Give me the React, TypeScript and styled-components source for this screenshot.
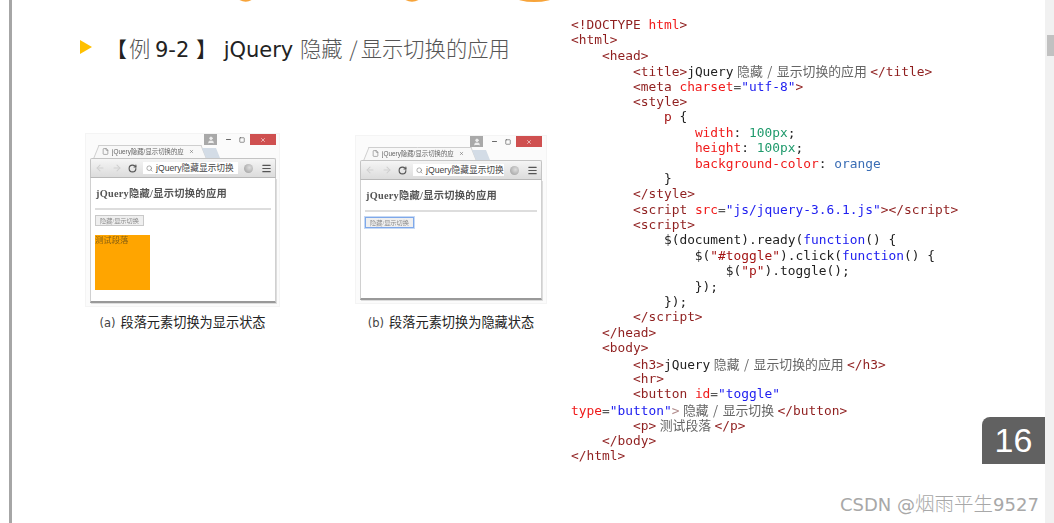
import React from "react";
import styled, { createGlobalStyle } from "styled-components";
import { ArrowLeft, ArrowRight, RotateCw, Search, File, User, Menu, Minus, Square, X } from "lucide-react";

const Global = createGlobalStyle`
  html, body { margin: 0; padding: 0; background: #fff; overflow: hidden; }
`;

const Page = styled.div`
  display: flex;
  width: 1054px;
  height: 523px;
  overflow: hidden;
  background: #fff;
`;
const Slide = styled.main`
  position: relative;
  flex: 1;
  display: flex;
  margin-left: 9px;
  border-left: 3px solid #a6a6a6;
`;
const Scrollbar = styled.div`
  width: 9px;
  background: #f1f1f1;
  display: flex;
  justify-content: flex-end;
  padding-top: 35px;
  box-sizing: border-box;
`;
const Thumb = styled.div`
  width: 7px;
  height: 21px;
  background: #c1c1c1;
`;
const LeftColumn = styled.section`
  width: 559px;
  flex: none;
  display: flex;
  flex-direction: column;
`;
const TitleRemnant = styled.svg`
  display: block;
  width: 559px;
  height: 4px;
  flex: none;
`;
const HeadingRow = styled.div`
  margin-top: 33px;
  height: 24px;
  display: flex;
  align-items: center;
  padding-left: 68px;
`;
const Arrow = styled.div`
  width: 0;
  height: 0;
  margin-top: -5px;
  border-left: 12px solid #ffc000;
  border-top: 7px solid transparent;
  border-bottom: 7px solid transparent;
`;
const Heading = styled.h2`
  margin: -1px 0 0 14px;
  font: 400 21px/24px "DejaVu Sans", "Noto Sans CJK SC", sans-serif;
  color: #222;
  white-space: pre;
`;
const HeadingCjk = styled.span`
  font-family: "Noto Sans CJK SC", sans-serif;
  font-size: 21.3px;
  font-weight: 300;
  color: #555;
`;
const HeadingExample = styled(HeadingCjk)`
  margin: 0 -2px 0 2px;
`;
const HeadingSlash = styled.span`
  margin: 0 3px 0 2px;
`;
const Figures = styled.div`
  margin-top: 73px;
  padding-left: 74px;
  display: flex;
  align-items: stretch;
  gap: 77px;
`;
const Figure = styled.figure<{ $top: number }>`
  margin: ${(p) => p.$top}px 0 0;
  display: flex;
  flex-direction: column;
  align-items: center;
`;
const Frame = styled.div<{ $w: number; $h: number; $pad: number }>`
  width: ${(p) => p.$w}px;
  height: ${(p) => p.$h}px;
  box-sizing: border-box;
  padding: 0 ${(p) => p.$pad}px 3px 4px;
  background: #fbfbfb;
  display: flex;
  flex-direction: column;
  filter: blur(0.45px);
  box-shadow: 0 0 0 1px #f4f4f4;
`;
const TitleBar = styled.div`
  height: 11px;
  flex: none;
  display: flex;
  align-items: stretch;
  justify-content: flex-end;
`;
const Avatar = styled.div`
  width: 13px;
  margin-right: 4px;
  background: #a9a9a9;
  color: #eee;
  display: flex;
  align-items: center;
  justify-content: center;
`;
const WinButton = styled.div`
  width: 14px;
  color: #555;
  display: flex;
  align-items: center;
  justify-content: center;
`;
const CloseButton = styled.div`
  width: 26px;
  margin-left: 1px;
  background: #cf5050;
  color: #f4d0d0;
  display: flex;
  align-items: center;
  justify-content: center;
`;
const TabRow = styled.div`
  height: 13px;
  flex: none;
  display: flex;
  padding-left: 9px;
`;
const Tab = styled.div`
  position: relative;
  width: 101px;
  height: 13px;
  display: flex;
  align-items: center;
  gap: 3px;
  padding-left: 3px;
  box-sizing: border-box;
  &::before {
    content: "";
    position: absolute;
    inset: 0 50% 0 -3px;
    background: #f8f8f8;
    border: 1px solid #cfcfcf;
    border-width: 1px 0 0 1px;
    transform: skewX(-22deg);
  }
  &::after {
    content: "";
    position: absolute;
    inset: 0 -3px 0 50%;
    background: #f8f8f8;
    border: 1px solid #cfcfcf;
    border-width: 1px 1px 0 0;
    transform: skewX(22deg);
  }
  & > * { position: relative; z-index: 1; }
`;
const TabText = styled.span`
  font: 400 6.4px/10px "Liberation Sans", "Noto Sans CJK SC", sans-serif;
  color: #666;
  width: 74px;
  overflow: hidden;
  white-space: nowrap;
`;
const TabClose = styled.span`
  color: #666;
  display: flex;
`;
const NewTab = styled.div`
  width: 14px;
  height: 10px;
  margin: 3px 0 0 4px;
  background: #d3dce6;
  transform: skewX(22deg);
`;
const Toolbar = styled.div`
  height: 20px;
  flex: none;
  box-sizing: border-box;
  display: flex;
  align-items: center;
  gap: 3px;
  padding: 0 3px 0 4px;
  background: linear-gradient(#f5f5f5, #dcdcdc);
  border: 1px solid #c4c4c4;
  border-bottom-color: #b8b8b8;
  border-radius: 2px 2px 0 0;
`;
const NavIcon = styled.span<{ $c: string; $gap?: number }>`
  display: flex;
  color: ${(p) => p.$c};
  margin-right: ${(p) => p.$gap ?? 0}px;
`;
const Omnibox = styled.div`
  flex: 1;
  min-width: 0;
  height: 12px;
  background: #fff;
  display: flex;
  align-items: center;
  gap: 3px;
  padding-left: 3px;
  overflow: hidden;
`;
const OmniText = styled.span`
  font: 400 8.7px/12px "Liberation Sans", "Noto Sans CJK SC", sans-serif;
  color: #444;
  white-space: nowrap;
`;
const Globe = styled.div`
  width: 9px;
  height: 9px;
  margin: 0 5px 0 3px;
  border-radius: 50%;
  background: radial-gradient(circle at 60% 40%, #ddd, #999);
  flex: none;
`;
const Content = styled.div`
  flex: 1;
  min-height: 0;
  background: #fff;
  border: 1px solid #d0d0d0;
  border-top: none;
  border-bottom: 2px solid #999;
  padding: 9px 4px 0 4px;
  box-shadow: 1px 1px 0 #ddd;
`;
const PageTitle = styled.h3`
  margin: 0 0 0 1px;
  font: 700 10.3px/14px "Liberation Serif", "Noto Sans CJK SC", serif;
  color: #555;
  white-space: nowrap;
  letter-spacing: 0.25px;
`;
const PageRule = styled.hr`
  margin: 7px 0 5px;
  border: none;
  height: 2px;
  background: #ddd;
`;
const PageButton = styled.div<{ $focus?: boolean }>`
  width: 49px;
  height: 11px;
  box-sizing: border-box;
  border: 1px solid ${(p) => (p.$focus ? "#7ea8ea" : "#c9c9c9")};
  box-shadow: ${(p) => (p.$focus ? "0 0 0 1px #c6d9f4" : "none")};
  background: #efefef;
  font: 400 6.2px/9px "Liberation Serif", "Noto Sans CJK SC", serif;
  color: #8a8a8a;
  text-align: center;
  white-space: nowrap;
  overflow: hidden;
`;
const OrangeBox = styled.div`
  margin-top: 9px;
  width: 55px;
  height: 55px;
  background: #ffa500;
  font: 400 8.4px/11px "Liberation Serif", "Noto Sans CJK SC", serif;
  color: #8a6210;
`;
const Caption = styled.figcaption`
  margin-top: auto;
  padding-top: 7px;
  font: 400 13.2px/18px "Noto Sans CJK SC", sans-serif;
  color: #222;
  white-space: pre;
`;
const CaptionTag = styled.span`
  font: 400 11.5px/18px "DejaVu Sans", sans-serif;
  color: #444;
  margin-right: 5px;
`;

const CodeColumn = styled.pre`
  margin: 0;
  padding: 17px 0 0;
  flex: none;
  font: 400 12.87px/15.4px "DejaVu Sans Mono", "Noto Sans CJK SC", monospace;
  color: #222;
  filter: blur(0.25px);
`;
const CodeLine = styled.div`
  height: 15.4px;
  white-space: pre;
`;
const palette: Record<string, string> = {
  t: "#8f1f1f",
  r: "#f01a1a",
  b: "#2020f0",
  g: "#1f9a6c",
  k: "#3a6db5",
  s: "#a31515",
  p: "#555555",
  d: "#222222",
  f: "#b08a8a",
};
const Token = styled.span<{ $k: string }>`
  color: ${(p) => palette[p.$k]};
`;
const CodeCjk = styled.span`
  color: #666;
  margin: 0 3.5px;
  word-spacing: 1.6px;
  font-family: "Noto Sans CJK SC", sans-serif;
`;

const Badge = styled.div`
  position: absolute;
  left: 970px;
  top: 417px;
  width: 63px;
  height: 47px;
  background: #616161;
  border-radius: 8px 0 0 0;
  color: #fff;
  font: 400 34px/47px "Liberation Sans", sans-serif;
  text-align: center;
`;
const Watermark = styled.div`
  position: absolute;
  left: 828px;
  top: 491px;
  font: 400 18px/24px "DejaVu Sans", "Noto Sans CJK SC", sans-serif;
  color: #a8a8a8;
  white-space: nowrap;
`;
const WatermarkCjk = styled.span`
  font: 300 19.5px/24px "Noto Sans CJK SC", sans-serif;
`;

type Seg = [string, string];
const code: Seg[][] = [
  [["t", "<!DOCTYPE "], ["r", "html"], ["t", ">"]],
  [["t", "<html>"]],
  [["d", "    "], ["t", "<head>"]],
  [["d", "        "], ["t", "<title>"], ["d", "jQuery"], ["c", "隐藏 / 显示切换的应用"], ["t", "</title>"]],
  [["d", "        "], ["t", "<meta "], ["r", "charset"], ["p", "="], ["b", "\"utf-8\""], ["t", ">"]],
  [["d", "        "], ["t", "<style>"]],
  [["d", "            "], ["s", "p"], ["d", " {"]],
  [["d", "                "], ["r", "width"], ["d", ": "], ["g", "100px"], ["d", ";"]],
  [["d", "                "], ["r", "height"], ["d", ": "], ["g", "100px"], ["d", ";"]],
  [["d", "                "], ["r", "background-color"], ["d", ": "], ["k", "orange"]],
  [["d", "            }"]],
  [["d", "        "], ["t", "</style>"]],
  [["d", "        "], ["t", "<script "], ["r", "src"], ["p", "="], ["b", "\"js/jquery-3.6.1.js\""], ["t", "></script>"]],
  [["d", "        "], ["t", "<script>"]],
  [["d", "            $(document).ready("], ["b", "function"], ["d", "() {"]],
  [["d", "                $("], ["s", "\"#toggle\""], ["d", ").click("], ["b", "function"], ["d", "() {"]],
  [["d", "                    $("], ["s", "\"p\""], ["d", ").toggle();"]],
  [["d", "                });"]],
  [["d", "            });"]],
  [["d", "        "], ["t", "</script>"]],
  [["d", "    "], ["t", "</head>"]],
  [["d", "    "], ["t", "<body>"]],
  [["d", "        "], ["t", "<h3>"], ["d", "jQuery"], ["c", "隐藏 / 显示切换的应用"], ["t", "</h3>"]],
  [["d", "        "], ["t", "<hr>"]],
  [["d", "        "], ["t", "<button "], ["r", "id"], ["p", "="], ["b", "\"toggle\""]],
  [["r", "type"], ["p", "="], ["b", "\"button\""], ["f", ">"], ["c", "隐藏 / 显示切换"], ["t", "</button>"]],
  [["d", "        "], ["t", "<p>"], ["c", "测试段落"], ["t", "</p>"]],
  [["d", "    "], ["t", "</body>"]],
  [["t", "</html>"]],
];

function BrowserWindow(props: { w: number; h: number; pad: number; open: boolean }) {
  return (
    <Frame $w={props.w} $h={props.h} $pad={props.pad}>
      <TitleBar>
        <Avatar><User size={8} fill="currentColor" /></Avatar>
        <WinButton><Minus size={7} strokeWidth={3} /></WinButton>
        <WinButton><Square size={6} strokeWidth={2.5} /></WinButton>
        <CloseButton><X size={6} strokeWidth={3} /></CloseButton>
      </TitleBar>
      <TabRow>
        <Tab>
          <NavIcon $c="#777"><File size={7} /></NavIcon>
          <TabText>jQuery隐藏/显示切换的应</TabText>
          <TabClose><X size={5} strokeWidth={2.5} /></TabClose>
        </Tab>
        <NewTab />
      </TabRow>
      <Toolbar>
        <NavIcon $c="#cfcfcf" $gap={4}><ArrowLeft size={10} strokeWidth={2.5} /></NavIcon>
        <NavIcon $c="#cfcfcf" $gap={3}><ArrowRight size={10} strokeWidth={2.5} /></NavIcon>
        <NavIcon $c="#555" $gap={3}><RotateCw size={9} strokeWidth={3} /></NavIcon>
        <Omnibox>
          <NavIcon $c="#777"><Search size={7} strokeWidth={2} /></NavIcon>
          <OmniText>jQuery隐藏显示切换</OmniText>
        </Omnibox>
        <Globe />
        <NavIcon $c="#555"><Menu size={11} strokeWidth={2.6} /></NavIcon>
      </Toolbar>
      <Content>
        <PageTitle>jQuery隐藏/显示切换的应用</PageTitle>
        <PageRule />
        <PageButton $focus={!props.open}>隐藏/显示切换</PageButton>
        {props.open && <OrangeBox>测试段落</OrangeBox>}
      </Content>
    </Frame>
  );
}

export default function App() {
  return (
    <Page>
      <Global />
      <Slide>
        <LeftColumn>
          <TitleRemnant viewBox="0 0 559 4">
            <g fill="none" stroke="#f7a43a" strokeWidth="2.4" strokeLinecap="round">
              <path d="M228 -1 Q234 2 239 -1" />
              <path d="M394 -1 Q400 2 406 -1" />
              <path d="M508 -1 Q522 2.6 537 -1" />
            </g>
          </TitleRemnant>
          <HeadingRow>
            <Arrow />
            <Heading>
              【<HeadingExample>例</HeadingExample> 9-2 】 jQuery <HeadingCjk>隐藏<HeadingSlash> /</HeadingSlash>显示切换的应用</HeadingCjk>
            </Heading>
          </HeadingRow>
          <Figures>
            <Figure $top={0}>
              <BrowserWindow w={193} h={172} pad={3} open />
              <Caption><CaptionTag>(a)</CaptionTag>段落元素切换为显示状态</Caption>
            </Figure>
            <Figure $top={2}>
              <BrowserWindow w={190} h={167} pad={4} open={false} />
              <Caption><CaptionTag>(b)</CaptionTag>段落元素切换为隐藏状态</Caption>
            </Figure>
          </Figures>
        </LeftColumn>
        <CodeColumn>
          {code.map((line, i) => (
            <CodeLine key={i}>
              {line.map(([k, text], j) =>
                k === "c" ? <CodeCjk key={j}>{text}</CodeCjk> : <Token key={j} $k={k}>{text}</Token>
              )}
            </CodeLine>
          ))}
        </CodeColumn>
        <Badge>16</Badge>
        <Watermark>CSDN @<WatermarkCjk>烟雨平生</WatermarkCjk>9527</Watermark>
      </Slide>
      <Scrollbar><Thumb /></Scrollbar>
    </Page>
  );
}
